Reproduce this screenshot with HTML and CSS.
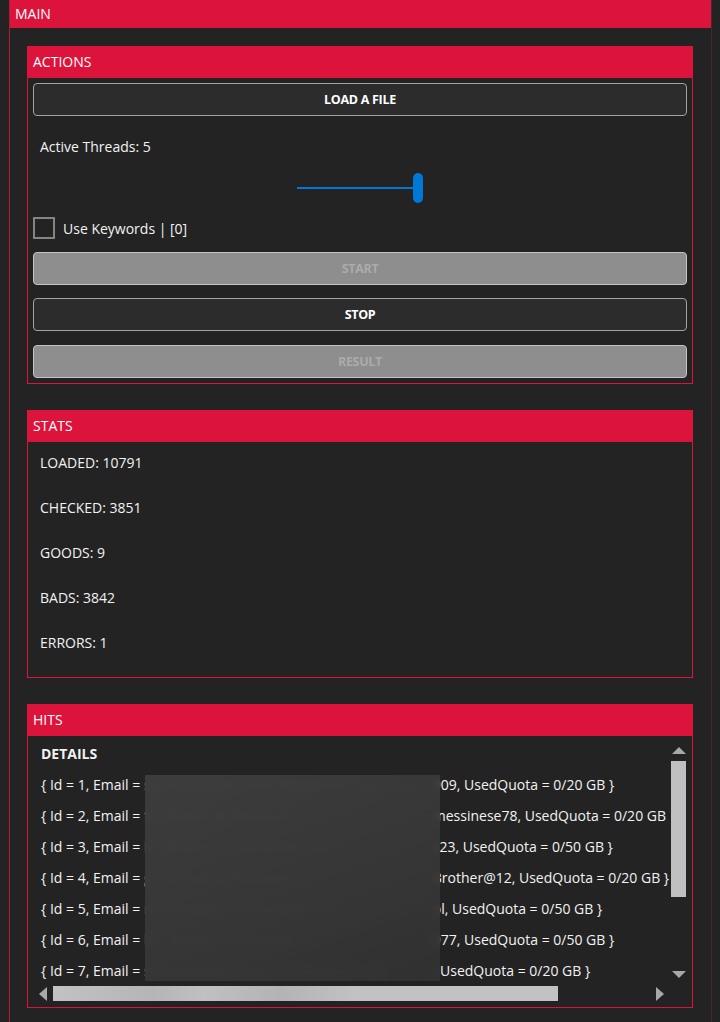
FILE: index.html
```html
<!DOCTYPE html>
<html lang="en">
<head>
    <meta charset="UTF-8">
    <meta name="viewport" content="width=device-width, initial-scale=1.0">
    <title>Checker</title>
    <link rel="stylesheet" href="styles.css">
</head>
<body>
    <div class="main">
        <div class="main-header">MAIN</div>
        <div class="main-body">

            <div class="group">
                <div class="group-header">ACTIONS</div>
                <div class="group-body actions">
                    <button class="btn">LOAD A FILE</button>
                    <div class="threads-label">Active Threads: 5</div>
                    <div class="slider">
                        <div class="slider-track"></div>
                        <div class="slider-thumb"></div>
                    </div>
                    <label class="check-row">
                        <span class="checkbox"></span>
                        <span>Use Keywords | [0]</span>
                    </label>
                    <button class="btn disabled">START</button>
                    <button class="btn">STOP</button>
                    <button class="btn disabled last">RESULT</button>
                </div>
            </div>

            <div class="group">
                <div class="group-header">STATS</div>
                <div class="group-body stats">
                    <div class="stat">LOADED: 10791</div>
                    <div class="stat">CHECKED: 3851</div>
                    <div class="stat">GOODS: 9</div>
                    <div class="stat">BADS: 3842</div>
                    <div class="stat">ERRORS: 1</div>
                </div>
            </div>

            <div class="group">
                <div class="group-header">HITS</div>
                <div class="group-body hits">
                    <div class="listbox">
                        <div class="list-content">
                            <div class="list-title">DETAILS</div>
                            <div class="list-row"><span>{ Id = 1, Email = </span><span class="hidden">sa...l@sudden...com, Password = pa...o</span><span>909, UsedQuota = 0/20 GB }</span></div>
                            <div class="list-row"><span>{ Id = 2, Email = </span><span class="hidden">fr...@mail...it, Password = </span><span>messinese78, UsedQuota = 0/20 GB }</span></div>
                            <div class="list-row"><span>{ Id = 3, Email = </span><span class="hidden">h...@libero.it, Password = pas</span><span>s23, UsedQuota = 0/50 GB }</span></div>
                            <div class="list-row"><span>{ Id = 4, Email = </span><span class="hidden">g...@tiscali.it, Password = </span><span>Brother@12, UsedQuota = 0/20 GB }</span></div>
                            <div class="list-row"><span>{ Id = 5, Email = </span><span class="hidden">m...@virgilio.it, Password = co</span><span>ol, UsedQuota = 0/50 GB }</span></div>
                            <div class="list-row"><span>{ Id = 6, Email = </span><span class="hidden">ka...@alice.it, Password = 1</span><span>977, UsedQuota = 0/50 GB }</span></div>
                            <div class="list-row"><span>{ Id = 7, Email = </span><span class="hidden">sebastian@outlook.it, Password = col</span><span>, UsedQuota = 0/20 GB }</span></div>
                            <div class="redact"></div>
                        </div>
                        <div class="vbar">
                            <span class="arrow-up"></span>
                            <span class="vthumb"></span>
                            <span class="arrow-down"></span>
                        </div>
                        <div class="hbar">
                            <span class="arrow-left"></span>
                            <span class="hthumb"></span>
                            <span class="arrow-right"></span>
                        </div>
                        <div class="corner"></div>
                    </div>
                </div>
            </div>

        </div>
    </div>
</body>
</html>
```

FILE: styles.css
```css
body {
    margin: 0;
    padding: 0;
    background-color: #232323;
    color: #f2f2f2;
    font-family: "Open Sans", "Noto Sans", sans-serif;
    font-size: 14px;
}
.main {
    margin-left: 9px;
    width: 701px;
    min-height: 1022px;
    border-left: 1px solid #b21a3a;
    border-right: 1px solid #3e2a2f;
}
.main-header {
    background-color: #dc143c;
    color: #fff;
    height: 28px;
    line-height: 27px;
    padding-left: 5px;
    font-size: 14px;
}
.main-body {
    padding: 18px 18px 0 17px;
}
.group {
    border: 1px solid #dc143c;
    border-top: none;
    margin-bottom: 26px;
}
.group-header {
    background-color: #dc143c;
    color: #fff;
    height: 32px;
    line-height: 32px;
    padding-left: 5px;
    font-size: 14px;
}

/* actions */
.actions {
    padding: 5px 5px 5px 5px;
    display: flex;
    flex-direction: column;
}
.btn {
    height: 33px;
    background-color: #2c2c2c;
    border: 1px solid #a3a3a3;
    border-radius: 4px;
    color: #fff;
    font-family: "Open Sans", "Noto Sans", sans-serif;
    font-weight: bold;
    font-size: 12.5px;
    letter-spacing: -0.3px;
    margin-bottom: 13px;
    padding: 0;
}
.btn.disabled {
    background-color: #8e8e8e;
    border-color: #c4c4c4;
    color: #ababab;
}
.btn.last {
    margin-bottom: 0;
    margin-top: 1px;
}
.actions .btn:first-child {
    margin-bottom: 0;
}
.threads-label {
    margin-top: 21px;
    height: 20px;
    line-height: 20px;
    padding-left: 7px;
}
.slider {
    position: relative;
    margin: 16px auto 0;
    width: 126px;
    height: 30px;
}
.slider-track {
    position: absolute;
    left: 0;
    right: 8px;
    top: 14px;
    height: 2px;
    background-color: #0078d7;
}
.slider-thumb {
    position: absolute;
    right: 0;
    top: 0;
    width: 10px;
    height: 30px;
    border-radius: 5px;
    background-color: #0078d7;
}
.check-row {
    display: flex;
    align-items: center;
    gap: 8px;
    margin-top: 14px;
    margin-bottom: 13px;
    height: 22px;
}
.checkbox {
    width: 18px;
    height: 18px;
    border: 2px solid #858585;
}

/* stats */
.stats {
    padding: 11px 7px 24px 12px;
    display: flex;
    flex-direction: column;
    gap: 25px;
}
.stat {
    height: 20px;
    line-height: 20px;
}

/* hits */
.hits {
    padding: 2px 5px 5px 5px;
}
.listbox {
    display: grid;
    grid-template-columns: 1fr 17px;
    grid-template-rows: 247px 17px;
}
.list-content {
    position: relative;
    overflow: hidden;
    padding-left: 8px;
    white-space: nowrap;
}
.list-title {
    font-weight: bold;
    height: 31px;
    line-height: 31px;
}
.list-row {
    height: 31px;
    line-height: 31px;
}
.hidden {
    display: inline-block;
    width: 289px;
    overflow: hidden;
    vertical-align: top;
    color: #777;
}
.redact {
    position: absolute;
    left: 112px;
    top: 37px;
    width: 295px;
    height: 206px;
    background: linear-gradient(160deg, rgba(62, 62, 62, 0.94), rgba(50, 50, 50, 0.95));
    backdrop-filter: blur(3px);
}
.vbar {
    display: flex;
    flex-direction: column;
    align-items: center;
    padding: 9px 0 7px;
}
.arrow-up {
    border-left: 7px solid transparent;
    border-right: 7px solid transparent;
    border-bottom: 7px solid #a8a8a8;
}
.vthumb {
    margin-top: 7px;
    width: 15px;
    height: 136px;
    background-color: #c0c0c0;
}
.arrow-down {
    margin-top: auto;
    border-left: 7px solid transparent;
    border-right: 7px solid transparent;
    border-top: 7px solid #a8a8a8;
}
.hbar {
    display: flex;
    align-items: center;
    padding: 0 6px;
}
.arrow-left {
    border-top: 7px solid transparent;
    border-bottom: 7px solid transparent;
    border-right: 8px solid #a8a8a8;
}
.hthumb {
    margin-left: 6px;
    width: 505px;
    height: 15px;
    background: linear-gradient(90deg, #c2c2c2 0%, #b5b5b5 20%, #c0c0c0 30%, #b3b3b3 45%, #c2c2c2 60%, #c2c2c2 100%);
}
.arrow-right {
    margin-left: auto;
    border-top: 7px solid transparent;
    border-bottom: 7px solid transparent;
    border-left: 8px solid #a8a8a8;
}
```
